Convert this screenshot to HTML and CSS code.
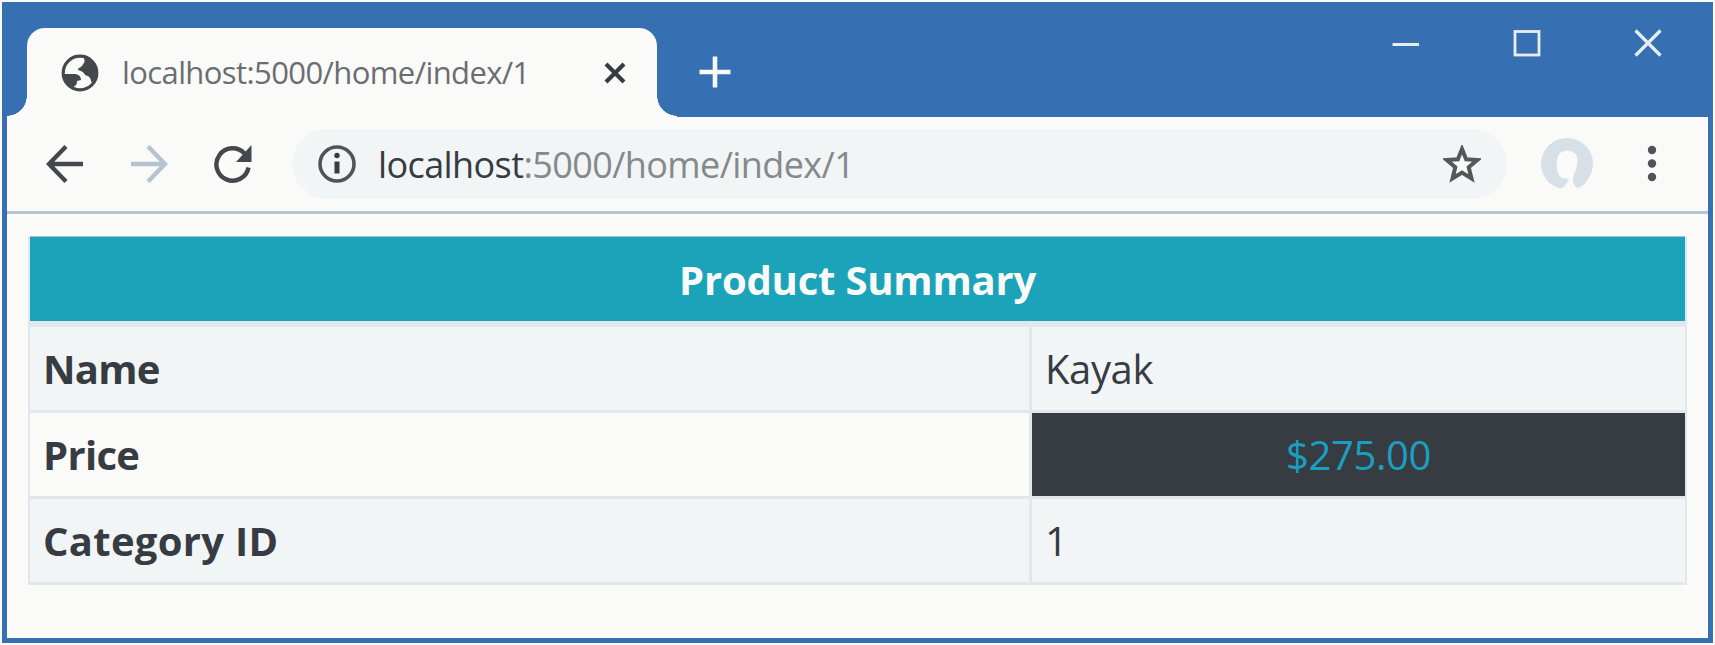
FILE: index.html
```
<!DOCTYPE html>
<html lang="en">
<head>
<meta charset="utf-8">
<title>localhost:5000/home/index/1</title>
<link rel="stylesheet" href="styles.css">
</head>
<body>
<div class="window">
  <header class="titlebar">
    <div class="tab">
      <svg class="globe" viewBox="0 0 38 38"><circle cx="19" cy="19" r="16.8" fill="#fafbf9" stroke="#44484d" stroke-width="3.2"/><path d="M22 2.500C31 4 36 11 35.500 20C35 25 32 28 30 28C30 24 28 22 24 21C23 18 20 17 17 16C17 13 21 14 22 10C24 9 24 5 22 2.500ZM2.500 20H13C17 20 20 22 20 26L16 27C16 31 14 33 10 33C4 30 2 25 2.500 20Z" fill="#44484d"/></svg>
      <span class="tab-title">localhost:5000/home/index/1</span>
      <svg class="tab-close" viewBox="0 0 24 24"><path d="M3 3 21 21M21 3 3 21" fill="none" stroke="#373c43" stroke-width="4.200"/></svg>
    </div>
    <svg class="new-tab" viewBox="0 0 32 32"><path d="M16 .5V31.500M.5 16H31.500" stroke="#fafbf9" stroke-width="4.600"/></svg>
    <div class="controls">
      <svg viewBox="0 0 28 28"><path d="M.5 15.500H27" stroke="#e8edef" stroke-width="3"/></svg>
      <svg viewBox="0 0 28 28"><rect x="2" y="2.500" width="24" height="23.500" fill="none" stroke="#e8edef" stroke-width="2.800"/></svg>
      <svg viewBox="0 0 28 28"><path d="M1.500 1.500 26.500 26.500M26.500 1.500 1.500 26.500" stroke="#e8edef" stroke-width="3.200"/></svg>
    </div>
  </header>
  <nav class="toolbar">
    <svg class="back" viewBox="0 0 38 38"><path d="M20 1.500 3 19 20 36.500M3 19H37" fill="none" stroke="#44484d" stroke-width="4.400"/></svg>
    <svg class="forward" viewBox="0 0 38 38"><path d="M18 1.500 35 19 18 36.500M35 19H1" fill="none" stroke="#b4c3cd" stroke-width="4.400"/></svg>
    <svg class="reload" viewBox="0 0 38 38"><path d="M34.500 22.500A16.200 16.200 0 1 1 30.500 8.500" fill="none" stroke="#44484d" stroke-width="4.400"/><path d="M37.500 0V17H22Z" fill="#44484d"/></svg>
    <div class="address">
      <svg class="info" viewBox="0 0 38 38"><circle cx="19" cy="19" r="17" fill="none" stroke="#50545a" stroke-width="3.600"/><circle cx="19" cy="10.500" r="2.700" fill="#373c43"/><path d="M19 16.500V28.500" stroke="#373c43" stroke-width="5"/></svg>
      <span class="url"><span class="host">localhost</span>:5000/home/index/1</span>
      <svg class="star" viewBox="0 0 38 38"><path d="M19 4 23.100 14.300 34.200 15 25.700 22.200 28.500 33.400 19 27.500 9.500 33.400 12.300 22.200 3.800 15 14.900 14.300Z" fill="#fafbf9" stroke="#55575b" stroke-width="4"/></svg>
    </div>
    <svg class="avatar" viewBox="0 0 52 52"><path d="M18 50C7 47 0 37 0 25.500A26 25.500 0 0 1 52 25.500C52 37 44 48 37 50C32 48 31 42 33 36C36 30 37 25 36 19C34 11 20 11 17 18C15 23 15 31 18 37C20 41 24 41 28 40C26 46 23 51 18 50Z" fill="#d8e0e7"/></svg>
    <svg class="menu" viewBox="0 0 10 38"><circle cx="5" cy="5" r="4.200"/><circle cx="5" cy="18.500" r="4.200"/><circle cx="5" cy="32" r="4.200"/></svg>
  </nav>
  <main class="page">
    <table class="summary">
      <colgroup><col class="label-column"><col></colgroup>
      <thead><tr><th colspan="2"><span class="heading">Product Summary</span></th></tr></thead>
      <tbody>
        <tr><th><span class="short-label">Name</span></th><td><span class="value">Kayak</span></td></tr>
        <tr><th><span class="short-label">Price</span></th><td class="price"><span class="value">$275.00</span></td></tr>
        <tr><th><span class="long-label">Category ID</span></th><td>1</td></tr>
      </tbody>
    </table>
  </main>
</div>
</body>
</html>
```
FILE: styles.css
```
* { box-sizing: border-box; }
body {
  margin: 0;
  width: 1715px;
  height: 645px;
  padding: 2px 2px 3px;
  background: #fafbf9;
  font-family: "Open Sans", "Noto Sans", sans-serif;
  color: #373c43;
}
svg { display: block; flex: none; }
.window {
  height: 641px;
  display: flex;
  flex-direction: column;
  border: solid #3670b3;
  border-width: 0 5px 5px;
  background: #fafbf9;
}
.titlebar {
  height: 115px;
  margin: 0 -5px;
  padding-left: 25px;
  display: flex;
  background: #3670b3;
}
.tab {
  position: relative;
  width: 630px;
  height: 89px;
  margin-top: 26px;
  padding-left: 34px;
  display: flex;
  align-items: center;
  border-radius: 18px 18px 0 0;
  background: #fafbf9;
}
.tab::before, .tab::after {
  content: "";
  position: absolute;
  bottom: 0;
  width: 20px;
  height: 21px;
}
.tab::before { left: -20px; background: radial-gradient(circle at 0 0, #3670b3 19.500px, #fafbf9 20px); }
.tab::after { right: -20px; background: radial-gradient(circle at 100% 0, #3670b3 19.500px, #fafbf9 20px); }
.globe { width: 38px; height: 38px; }
.tab-title {
  width: 456px;
  margin: -2px 0 0 23px;
  font-size: 31px;
  letter-spacing: -0.6px;
  white-space: nowrap;
  color: #6c6d71;
}
.tab-close { width: 24px; height: 24px; margin-left: 25px; }
.new-tab { width: 32px; height: 32px; margin: 54px 0 0 42px; }
.controls {
  margin: 27px 51px 0 auto;
  display: flex;
  gap: 93px;
}
.controls svg { width: 28px; height: 28px; }
.toolbar {
  height: 97px;
  padding-left: 39px;
  display: flex;
  align-items: center;
  border-bottom: 3px solid #b4c5d1;
}
.back, .forward, .reload { width: 38px; height: 38px; }
.forward, .reload { margin-left: 46px; }
.address {
  width: 1215px;
  height: 70px;
  margin-left: 40px;
  padding: 0 26px;
  display: flex;
  align-items: center;
  border-radius: 35px;
  background: #f2f5f6;
}
.info { width: 38px; height: 38px; }
.url {
  margin-left: 22px;
  font-size: 36px;
  letter-spacing: -0.6px;
  white-space: nowrap;
  color: #85898d;
}
.host { color: #373c43; }
.star { width: 38px; height: 38px; margin-left: auto; }
.avatar { width: 52px; height: 52px; margin-left: 34px; }
.menu { width: 10px; height: 38px; margin-left: 54px; fill: #50545a; }
.page { flex: 1; padding: 22px 21px 0; }
.summary {
  width: 1659px;
  border-collapse: separate;
  border-spacing: 0;
  table-layout: fixed;
  border-left: 2px solid #e1e7ec;
  border-right: 2px solid #e1e7ec;
  font-size: 40px;
  line-height: 50px;
}
.label-column { width: 999px; }
.summary th, .summary td {
  height: 86px;
  padding: 1px 13px 0;
  text-align: left;
  border-bottom: 3px solid #e1e7ec;
}
.summary td { font-weight: 400; border-left: 3px solid #e1e7ec; }
.summary thead th {
  height: 91px;
  padding-top: 2px;
  text-align: center;
  color: #fafbf9;
  background: #1aa3b9;
  border-top: 1px solid #a9c4d2;
  border-bottom: 6px solid #e1e7ec;
}
.summary tbody tr:nth-child(odd) { background: #f2f5f6; }
.summary .price { text-align: center; background: #373c43; color: #1a9fc0; }
.heading { letter-spacing: -0.2px; }
.short-label { letter-spacing: -0.7px; }
.long-label { letter-spacing: 0.3px; }
.value { letter-spacing: -0.4px; }
```
